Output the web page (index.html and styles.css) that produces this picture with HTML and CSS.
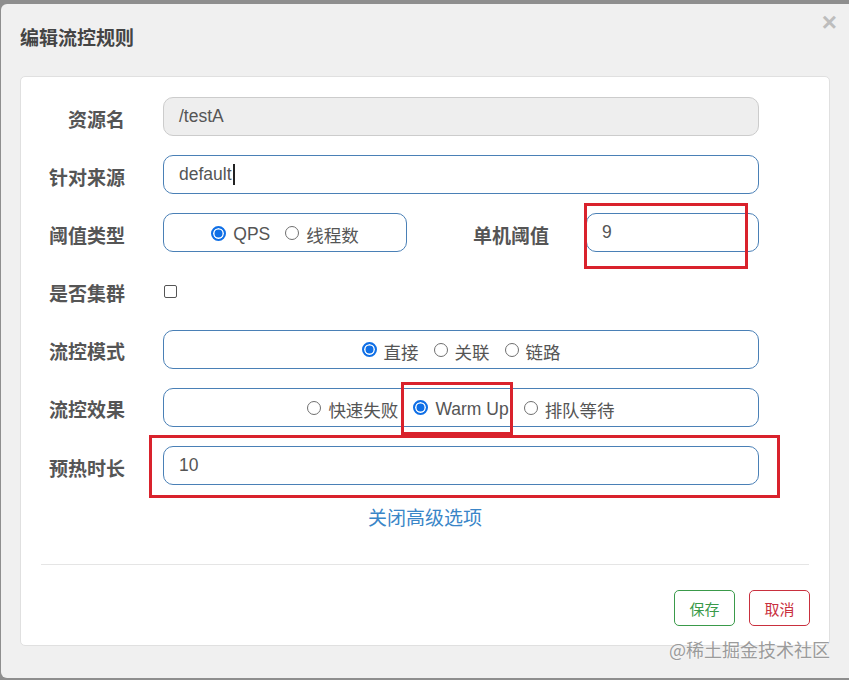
FILE: index.html
```html
<!DOCTYPE html>
<html lang="zh-CN">
<head>
    <meta charset="UTF-8">
    <title>编辑流控规则</title>
    <link rel="stylesheet" href="styles.css">
</head>
<body>
    <div class="modal">
        <div class="modal-header">
            <h3 class="modal-title">编辑流控规则</h3>
            <span class="close">×</span>
        </div>

        <div class="panel">
            <div class="form">
                <div class="row">
                    <label class="label">资源名</label>
                    <div class="input disabled">/testA</div>
                </div>
                <div class="row">
                    <label class="label">针对来源</label>
                    <div class="input">default<span class="caret"></span></div>
                </div>
                <div class="row">
                    <label class="label">阈值类型</label>
                    <div class="radio-box small">
                        <span class="radio on"></span><span class="opt">QPS</span>
                        <span class="radio"></span><span class="opt">线程数</span>
                    </div>
                    <label class="label label-mid">单机阈值</label>
                    <div class="input short">9</div>
                </div>
                <div class="row">
                    <label class="label">是否集群</label>
                    <span class="checkbox"></span>
                </div>
                <div class="row">
                    <label class="label">流控模式</label>
                    <div class="radio-box">
                        <span class="radio on"></span><span class="opt">直接</span>
                        <span class="radio"></span><span class="opt">关联</span>
                        <span class="radio"></span><span class="opt">链路</span>
                    </div>
                </div>
                <div class="row">
                    <label class="label">流控效果</label>
                    <div class="radio-box">
                        <span class="radio"></span><span class="opt">快速失败</span>
                        <span class="radio on"></span><span class="opt">Warm Up</span>
                        <span class="radio"></span><span class="opt">排队等待</span>
                    </div>
                </div>
                <div class="row">
                    <label class="label">预热时长</label>
                    <div class="input">10</div>
                </div>
            </div>

            <div class="toggle"><a href="#">关闭高级选项</a></div>

            <div class="divider"></div>

            <div class="actions">
                <button class="btn btn-save">保存</button>
                <button class="btn btn-cancel">取消</button>
            </div>
        </div>
    </div>

    <!-- annotations drawn on top of the screenshot -->
    <div class="mark mark-threshold"></div>
    <div class="mark mark-warmup"></div>
    <div class="mark mark-time"></div>

    <div class="watermark">@稀土掘金技术社区</div>
</body>
</html>
```

FILE: styles.css
```css
html, body {
    margin: 0;
    height: 100%;
    overflow: hidden;
}
body {
    position: relative;
    background: #8e8e8e;
    font-family: "Liberation Sans", "Noto Sans CJK SC", sans-serif;
    color: #555;
}
.modal {
    margin: 4px 0 0 1px;
    width: 870px;
    height: 674px;
    background: #f0f0f0;
    border-radius: 6px;
    box-sizing: border-box;
}
.modal-header {
    display: flex;
    justify-content: space-between;
    padding: 20px 0 0 19px;
    height: 72px;
    box-sizing: border-box;
}
.modal-title {
    margin: 0;
    font-family: "Noto Sans CJK SC", sans-serif;
    font-size: 19px;
    font-weight: bold;
    line-height: 26px;
    color: #444;
}
.close {
    margin: -15px 34px 0 0;
    font-size: 26px;
    font-weight: bold;
    color: #bdbdbd;
    line-height: 26px;
}
.panel {
    margin-left: 19px;
    width: 810px;
    height: 570px;
    box-sizing: border-box;
    background: #fff;
    border: 1px solid #e0e0e0;
    border-radius: 5px;
    padding: 20px 0 0;
}
.form {
    display: flex;
    flex-direction: column;
    gap: 19.2px;
}
.row {
    display: flex;
    align-items: center;
    height: 39px;
}
.label {
    width: 104px;
    margin-right: 38px;
    padding-top: 3px;
    text-align: right;
    font-family: "Noto Sans CJK SC", sans-serif;
    font-size: 19px;
    font-weight: bold;
    color: #555;
    flex-shrink: 0;
}
.label-mid {
    width: 142px;
    margin-right: 37px;
}
.input {
    width: 596px;
    height: 39px;
    box-sizing: border-box;
    border: 1px solid #4a80b6;
    border-radius: 10px;
    padding: 0 15px;
    display: flex;
    align-items: center;
    font-size: 17.5px;
    color: #555;
}
.input.disabled {
    background: #eee;
    border-color: #ccc;
}
.input.short {
    width: 173px;
}
.caret {
    display: inline-block;
    width: 2px;
    height: 21px;
    background: #222;
    margin-left: 1px;
}
.radio-box {
    width: 596px;
    height: 39px;
    box-sizing: border-box;
    border: 1px solid #4a80b6;
    border-radius: 10px;
    display: flex;
    align-items: center;
    justify-content: center;
    padding-top: 4px;
    font-size: 17.5px;
    color: #555;
}
.radio-box.small {
    width: 244px;
}
.radio {
    width: 14px;
    height: 14px;
    box-sizing: border-box;
    border: 1px solid #6f6f6f;
    border-radius: 50%;
    margin: -3px 7px 0 0;
    flex-shrink: 0;
}
.radio.on {
    width: 15px;
    height: 15px;
    border: 2px solid #0f6fe6;
    background: #0f6fe6;
    box-shadow: inset 0 0 0 1.5px #fff;
}
.opt {
    margin-right: 15px;
    font-family: "Liberation Sans", "Noto Sans CJK SC", sans-serif;
}
.opt:last-child {
    margin-right: 0;
}
.checkbox {
    width: 13px;
    height: 13px;
    box-sizing: border-box;
    border: 1px solid #555;
    border-radius: 2px;
    margin-left: 1px;
}
.toggle {
    text-align: center;
    margin-top: 19px;
    line-height: 26px;
}
.toggle a {
    font-family: "Noto Sans CJK SC", sans-serif;
    font-size: 19px;
    color: #3a86c8;
    text-decoration: none;
}
.divider {
    margin: 31px 20px 0;
    border-top: 1px solid #e5e5e5;
}
.actions {
    display: flex;
    justify-content: flex-end;
    gap: 14px;
    margin: 25px 19px 0 0;
}
.btn {
    height: 36px;
    width: 61px;
    background: #fff;
    border: 1px solid;
    border-radius: 5px;
    font-family: "Noto Sans CJK SC", sans-serif;
    font-size: 15px;
    padding: 0;
}
.btn-save {
    color: #3a9a4a;
    border-color: #3a9a4a;
}
.btn-cancel {
    color: #c9303e;
    border-color: #c9303e;
}
.mark {
    position: absolute;
    border: 3px solid #d9222c;
    box-sizing: border-box;
}
.mark-threshold {
    left: 584px;
    top: 203px;
    width: 164px;
    height: 66px;
}
.mark-warmup {
    left: 401px;
    top: 382px;
    width: 112px;
    height: 53px;
}
.mark-time {
    left: 149px;
    top: 435px;
    width: 631px;
    height: 63px;
}
.watermark {
    position: absolute;
    left: 669px;
    top: 637px;
    font-family: "Noto Sans CJK SC", sans-serif;
    font-size: 18px;
    line-height: 24px;
    color: #9b9b9b;
    text-shadow: 0 0 2px #fff;
}
```
